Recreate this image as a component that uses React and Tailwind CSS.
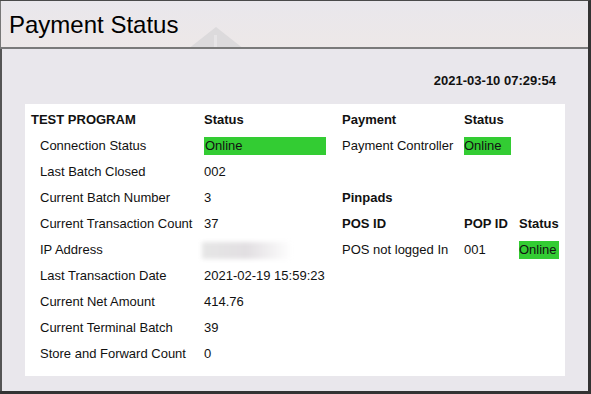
import React from "react";

const leftRows = [
  { label: "Connection Status", value: "Online", online: true },
  { label: "Last Batch Closed", value: "002" },
  { label: "Current Batch Number", value: "3" },
  { label: "Current Transaction Count", value: "37" },
  { label: "IP Address", value: "", blurred: true },
  { label: "Last Transaction Date", value: "2021-02-19 15:59:23" },
  { label: "Current Net Amount", value: "414.76" },
  { label: "Current Terminal Batch", value: "39" },
  { label: "Store and Forward Count", value: "0" },
];

const Row = ({ children }) => <div className="flex items-center h-[26px]">{children}</div>;

export default function App() {
  return (
    <div
      className="w-[591px] h-[394px] flex flex-col border-t border-t-[#4a4a4a] border-r-[3px] border-r-[#333] border-b-[3px] border-b-[#333] text-[13px] text-[#111]"
      style={{ fontFamily: '"Liberation Sans", Arial, sans-serif' }}
    >
      {/* Header */}
      <div className="relative h-[48px] flex items-center px-[8px] pt-[2px] border-l border-l-[#777] border-b-2 border-b-[#7a7a7a] bg-gradient-to-b from-[#e9e7ec] to-[#ede8e8] overflow-hidden">
        <svg className="absolute left-[182px] top-[26px]" width="66" height="26" viewBox="0 0 66 26">
          <polygon points="33,0 66,26 0,26" fill="#dcdadc" />
          <rect x="31" y="8" width="3" height="18" fill="#e6e4e6" />
        </svg>
        <span className="relative text-[24px] text-black leading-none">Payment Status</span>
      </div>

      {/* Body */}
      <div className="flex-1 flex flex-col bg-[#e9e7ec] border-l-2 border-l-[#555] pl-[23px] pr-[23px] pb-[15px]">
        <div className="h-[55px] flex items-center justify-end pr-[9px] pt-[8px] font-bold">2021-03-10 07:29:54</div>

        <div className="flex-1 bg-white flex pl-[6px] pt-[3px]">
          {/* Left table */}
          <div className="flex flex-col w-[311px]">
            <Row>
              <span className="w-[173px] font-bold">TEST PROGRAM</span>
              <span className="font-bold">Status</span>
            </Row>
            {leftRows.map((r) => (
              <Row key={r.label}>
                <span className="w-[173px] pl-[9px] whitespace-nowrap">{r.label}</span>
                {r.online ? (
                  <span className="w-[122px] h-[18px] flex items-center pl-[1px] bg-[#33cc33]">Online</span>
                ) : r.blurred ? (
                  <span className="w-[90px] h-[17px] -ml-[2px] bg-gradient-to-r from-[#e6e6e6] via-[#e2dfe2] to-white blur-[2px]" />
                ) : (
                  <span className="whitespace-nowrap">{r.value}</span>
                )}
              </Row>
            ))}
          </div>

          {/* Right table */}
          <div className="flex flex-col">
            <Row>
              <span className="w-[122px] font-bold">Payment</span>
              <span className="font-bold">Status</span>
            </Row>
            <Row>
              <span className="w-[122px]">Payment Controller</span>
              <span className="w-[47px] h-[18px] flex items-center bg-[#33cc33]">Online</span>
            </Row>
            <Row />
            <Row>
              <span className="font-bold">Pinpads</span>
            </Row>
            <Row>
              <span className="w-[122px] font-bold">POS ID</span>
              <span className="w-[55px] font-bold">POP ID</span>
              <span className="font-bold">Status</span>
            </Row>
            <Row>
              <span className="w-[122px]">POS not logged In</span>
              <span className="w-[55px]">001</span>
              <span className="w-[40px] h-[18px] flex items-center bg-[#33cc33]">Online</span>
            </Row>
          </div>
        </div>
      </div>
    </div>
  );
}
